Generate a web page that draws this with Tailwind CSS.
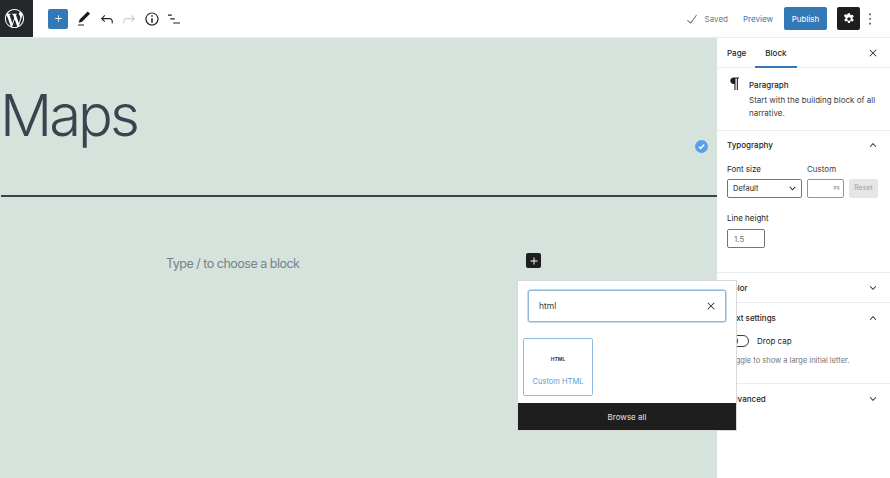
<!DOCTYPE html>
<html lang="en">
<head>
  <meta charset="UTF-8">
  <title>Maps - Editor</title>
  <script src="https://cdn.jsdelivr.net/npm/@tailwindcss/browser@4"></script>
</head>
<body class="h-[478px] w-[890px] overflow-hidden bg-white font-['Inter',sans-serif] text-[#1e1e1e]">
  <!-- Top bar -->
  <header class="flex h-[38px] items-center border-b border-[#ececec] bg-white">
    <div class="flex h-[37px] w-[33px] items-center justify-center bg-[#23282d]">
      <svg class="mr-[5px] h-[23px] w-[23px]" viewBox="0 0 24 24" fill="#fff"><path d="M12 2C6.500 2 2 6.500 2 12s4.500 10 10 10 10-4.500 10-10S17.500 2 12 2zM3 12c0-1.300.3-2.500.8-3.700l4.300 11.800C5 18.700 3 15.600 3 12zm9 9c-.9 0-1.700-.1-2.500-.4l2.700-7.800 2.700 7.500.1.100c-.9.400-1.900.6-3 .6zm1.200-13.200c.5 0 1-.1 1-.1.500-.1.400-.8-.1-.7 0 0-1.400.1-2.300.1-.8 0-2.200-.1-2.200-.1-.5 0-.6.700-.1.700 0 0 .4.100.9.100l1.300 3.700-1.900 5.600-3.100-9.300c.5 0 1-.1 1-.1.500-.1.400-.8-.1-.7 0 0-1.400.1-2.300.1h-.5C6.300 4.300 9 3 12 3c2.300 0 4.500.9 6.100 2.400H18c-.9 0-1.500.7-1.500 1.500 0 .7.400 1.300.9 2 .3.600.7 1.300.7 2.400 0 .7-.3 1.600-.7 2.700l-.9 2.900-3.300-9.700zm3.300 12l2.700-7.900c.5-1.300.7-2.300.7-3.200 0-.3 0-.6-.1-.9.700 1.300 1.100 2.700 1.100 4.200 0 3.300-1.800 6.200-4.400 7.800z"/></svg>
    </div>
    <div class="ml-[15px] flex h-[20px] w-[20px] items-center justify-center rounded-[2px] bg-[#3379b8]">
      <svg class="h-[13px] w-[13px]" viewBox="0 0 24 24" fill="#fff"><path d="M18 11.200h-5.200V6h-1.600v5.200H6v1.600h5.200V18h1.600v-5.200H18z"/></svg>
    </div>
    <div class="ml-[7px] flex items-center gap-[4.500px]">
      <svg class="h-[18px] w-[18px]" viewBox="0 0 24 24" fill="#1e1e1e"><path d="M20.100 5.100L16.900 2 6.200 12.700l-1.300 4.400 4.500-1.300L20.100 5.100zM4 20.800h8v-1.500H4v1.500z"/></svg>
      <svg class="h-[18px] w-[18px]" viewBox="0 0 24 24" fill="#1e1e1e"><path d="M18.300 11.700c-.6-.6-1.400-.9-2.300-.9H6.700l2.900-3.300-1.100-1-4.500 5L8.500 16l1-1-2.700-2.700H16c.5 0 .9.200 1.300.5 1 1 1 3.400 1 4.500v.3h1.500v-.200c0-1.500 0-4.300-1.500-5.700z"/></svg>
      <svg class="h-[18px] w-[18px]" viewBox="0 0 24 24" fill="#cccccc"><path d="M15.600 6.500l-1.100 1 2.900 3.300H8c-.9 0-1.700.3-2.300.9-1.400 1.500-1.400 4.200-1.400 5.600v.2h1.500v-.3c0-1.100 0-3.500 1-4.500.3-.3.700-.5 1.300-.5h9.200L14.500 15l1.100 1.100 4.600-4.600-4.600-5z"/></svg>
      <svg class="h-[18px] w-[18px]" viewBox="0 0 24 24" fill="#1e1e1e"><path d="M12 3.200c-4.800 0-8.800 3.900-8.800 8.800 0 4.800 3.900 8.800 8.800 8.800 4.800 0 8.800-3.900 8.800-8.800 0-4.800-4-8.800-8.800-8.800zm0 16c-4 0-7.200-3.300-7.200-7.200C4.800 8 8 4.800 12 4.800s7.200 3.300 7.200 7.200c0 4-3.200 7.200-7.200 7.200zM11 17h2v-6h-2v6zm0-8h2V7h-2v2z"/></svg>
      <svg class="h-[18px] w-[18px]" viewBox="0 0 24 24" fill="#1e1e1e"><path d="M9 6H4v1.500h5V6zm4 5H7v1.500h6V11zm7 5.500h-9V18h9v-1.500z"/></svg>
    </div>
    <div class="ml-auto flex items-center">
      <svg class="h-[16px] w-[16px]" viewBox="0 0 24 24" fill="#757575"><path d="M18.300 5.600L9.900 16.900l-4.600-3.400-.9 1.200 5.800 4.300 9.300-12.600z"/></svg>
      <span class="ml-[5px] text-[8px] text-[#757575]">Saved</span>
      <span class="ml-[15px] text-[8px] text-[#3379b8]">Preview</span>
      <span class="ml-[11px] flex h-[23px] w-[43px] items-center justify-center rounded-[2px] bg-[#3379b8] text-[8px] text-white">Publish</span>
      <span class="ml-[10px] flex h-[23px] w-[23px] items-center justify-center rounded-[2px] bg-[#1e1e1e]">
        <svg class="h-[14px] w-[14px]" viewBox="0 0 24 24" fill="#fff"><path fill-rule="evenodd" d="M10.300 2h3.400l.5 2.900c.6.200 1.100.5 1.600.8l2.700-1 1.700 3-2.200 1.900c.1.600.1 1.200 0 1.800l2.200 1.900-1.700 3-2.700-1c-.5.400-1 .7-1.600.9l-.5 2.800h-3.400l-.5-2.800c-.6-.2-1.100-.5-1.600-.9l-2.700 1-1.700-3 2.200-1.900c-.1-.6-.1-1.200 0-1.800L3.300 6.700l1.700-3 2.700 1c.5-.3 1-.6 1.600-.8zM12 9a3 3 0 100 6 3 3 0 000-6z"/></svg>
      </span>
      <svg class="mr-[12px] ml-[2px] h-[20px] w-[16px]" viewBox="0 0 16 24" fill="#1e1e1e"><path d="M7.200 5.500h1.600v2H7.200zM7.200 11h1.600v2H7.200zM7.200 16.500h1.600v2H7.200z"/></svg>
    </div>
  </header>

  <div class="flex h-[440px]">
    <!-- Canvas -->
    <main class="relative w-[717px] shrink-0 bg-[#d5e3dc]">
      <h1 class="pt-[41px] text-[58px] leading-[73px] font-light tracking-[-3px] text-[#3a4450]">Maps</h1>
      <div class="mt-[43px] ml-[1px] h-[2px] bg-[#3a4450]"></div>
      <p class="mt-[57px] ml-[166px] text-[12.500px] leading-[20px] tracking-[-0.5px] text-[#75828a]">Type / to choose a block</p>

      <!-- Saved check on the title -->
      <div class="absolute top-[102px] left-[695px] flex h-[13px] w-[13px] items-center justify-center rounded-full bg-[#5aa0e6]">
        <svg class="h-[9px] w-[9px]" viewBox="0 0 10 10" fill="none" stroke="#fff" stroke-width="1.400"><path d="M2 5.200l2.100 2L8 2.800"/></svg>
      </div>

      <!-- Inserter toggle -->
      <div class="absolute top-[215px] left-[526px] flex h-[15px] w-[15px] items-center justify-center rounded-[2px] bg-[#1e1e1e]">
        <svg class="h-[14px] w-[14px]" viewBox="0 0 24 24" fill="#fff"><path d="M18 11.200h-5.200V6h-1.600v5.200H6v1.600h5.200V18h1.600v-5.200H18z"/></svg>
      </div>
    </main>

    <!-- Sidebar -->
    <aside class="w-[173px] shrink-0 bg-white text-[8px]">
      <div class="flex h-[30px] items-center border-b border-[#ececec] pr-[11px] pl-[10px]">
        <span class="font-medium">Page</span>
        <span class="relative ml-[19px] flex h-full items-center font-medium">Block<span class="absolute right-[-10px] bottom-[-1px] left-[-10px] h-[2px] bg-[#3379b8]"></span></span>
        <svg class="ml-auto h-[12px] w-[12px]" viewBox="0 0 24 24" fill="#1e1e1e"><path d="M13.100 12l6-6-1.100-1.100-6 6-6-6L4.900 6l6 6-6 6L6 19.100l6-6 6 6 1.100-1.100z"/></svg>
      </div>
      <section class="flex h-[63px] border-b border-[#ececec] pt-[9px] pl-[13px]">
        <svg class="h-[13px] w-[9px]" viewBox="0 0 9 13" fill="#1e1e1e"><path d="M3.500 0.500H9v1H7.900V13H6.800V1.500H5.500V13H4.400V7H3.500C1.700 7 0.300 5.700 0.300 3.800S1.700 0.500 3.500 0.500z"/></svg>
        <div class="ml-[10px] w-[135px]">
          <div class="leading-[16px] font-medium">Paragraph</div>
          <div class="mt-[1px] leading-[13px] text-[#3c3c3c]">Start with the building block of all narrative.</div>
        </div>
      </section>
      <section class="h-[142px] border-b border-[#ececec] pt-[7px] pr-[10px] pl-[10px]">
        <div class="flex h-[13px] items-center justify-between">
          <span class="font-medium">Typography</span>
          <svg class="h-[14px] w-[14px]" viewBox="0 0 24 24" fill="#1e1e1e"><path d="M6.500 14.500l1.100 1L12 10.700l4.400 4.800 1.100-1L12 8.500z"/></svg>
        </div>
        <div class="mt-[13px] flex">
          <div class="w-[80px]">
            <div class="leading-[11px]">Font size</div>
            <div class="mt-[4px] flex h-[19px] w-[75px] items-center justify-between rounded-[2px] border border-[#757575] pr-[2px] pl-[5px] text-[7.500px]">Default
              <svg class="h-[13px] w-[13px]" viewBox="0 0 24 24" fill="#1e1e1e"><path d="M17.500 9.500l-1.100-1L12 13.300 7.600 8.500l-1.100 1L12 15.500z"/></svg>
            </div>
          </div>
          <div>
            <div class="leading-[11px] text-[#3c3c3c]">Custom</div>
            <div class="mt-[4px] flex items-center">
              <div class="flex h-[19px] w-[37px] items-center justify-end rounded-[2px] border border-[#949494] pr-[3px] text-[5px] text-[#757575]">PX</div>
              <div class="ml-[5px] flex h-[19px] w-[29px] items-center justify-center rounded-[2px] bg-[#e6e6e6] text-[7px] text-[#a0a0a0]">Reset</div>
            </div>
          </div>
        </div>
        <div class="mt-[15px] leading-[11px]">Line height</div>
        <div class="mt-[5px] flex h-[19px] w-[38px] items-center rounded-[2px] border border-[#757575] pl-[6px] text-[8px] text-[#757575]">1.5</div>
      </section>
      <section class="flex h-[30px] items-center justify-between border-b border-[#ececec] pr-[10px] pl-[10px]">
        <span class="font-medium">Color</span>
        <svg class="h-[14px] w-[14px]" viewBox="0 0 24 24" fill="#1e1e1e"><path d="M17.500 9.500l-1.100-1L12 13.300 7.600 8.500l-1.100 1L12 15.500z"/></svg>
      </section>
      <section class="h-[81px] border-b border-[#ececec] pt-[8px] pr-[10px] pl-[10px]">
        <div class="flex h-[13px] items-center justify-between">
          <span class="font-medium">Text settings</span>
          <svg class="h-[14px] w-[14px]" viewBox="0 0 24 24" fill="#1e1e1e"><path d="M6.500 14.500l1.100 1L12 10.700l4.400 4.800 1.100-1L12 8.500z"/></svg>
        </div>
        <div class="mt-[11px] flex items-center">
          <span class="flex h-[12px] w-[22px] items-center rounded-full border border-[#3c3c3c] pl-[2px]"><span class="h-[8px] w-[8px] rounded-full bg-[#3c3c3c]"></span></span>
          <span class="ml-[8px]">Drop cap</span>
        </div>
        <div class="mt-[8px] text-[7.500px] text-[#757575]">Toggle to show a large initial letter.</div>
      </section>
      <section class="flex h-[30px] items-center justify-between pr-[10px] pl-[10px]">
        <span class="font-medium">Advanced</span>
        <svg class="h-[14px] w-[14px]" viewBox="0 0 24 24" fill="#1e1e1e"><path d="M17.500 9.500l-1.100-1L12 13.300 7.600 8.500l-1.100 1L12 15.500z"/></svg>
      </section>
    </aside>
  </div>

  <!-- Block inserter popover -->
  <div class="absolute top-[281px] left-[518px] w-[218px] bg-white shadow-[0_0_0_1px_#d8d8d8]">
    <div class="px-[10px] pt-[9px]">
      <div class="flex h-[32px] items-center justify-between rounded-[2px] border border-[#8fbade] pr-[8px] pl-[10px] text-[8.500px] text-[#3c3c3c] shadow-[0_0_0_0.5px_#8fbade]">html
        <svg class="h-[12px] w-[12px]" viewBox="0 0 24 24" fill="#1e1e1e"><path d="M13.100 12l6-6-1.100-1.100-6 6-6-6L4.900 6l6 6-6 6L6 19.100l6-6 6 6 1.100-1.100z"/></svg>
      </div>
    </div>
    <div class="mt-[16px] ml-[5px] flex h-[58px] w-[70px] flex-col items-center rounded-[2px] border border-[#8fbade]">
      <span class="mt-[17px] text-[5px] leading-[7px] font-bold text-[#3c3c3c]">HTML</span>
      <span class="mt-[13px] text-[7.500px] text-[#5b9bd5]">Custom HTML</span>
    </div>
    <div class="mt-[7px] flex h-[27px] items-center justify-center bg-[#1e1e1e] text-[8px] text-[#e0e0e0]">Browse all</div>
  </div>
</body>
</html>
